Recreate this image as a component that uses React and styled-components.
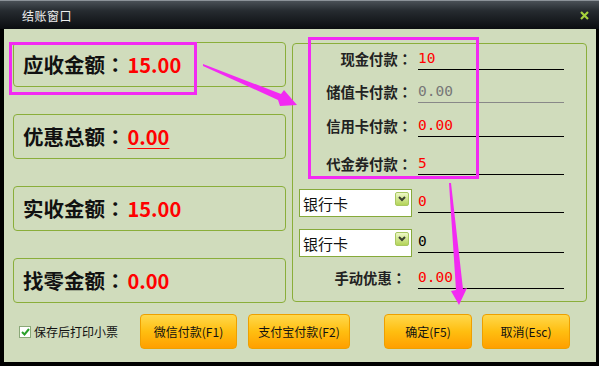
import React from 'react';
import styled, { createGlobalStyle } from 'styled-components';

const GlobalStyle = createGlobalStyle`
  html, body {
    margin: 0;
    padding: 0;
    background: #000;
  }
  body {
    font-family: "Noto Sans CJK SC", "Noto Sans", sans-serif;
  }
`;

const Window = styled.div`
  position: relative;
  width: 599px;
  height: 366px;
  box-sizing: border-box;
  padding: 0 3px 4px 4px;
  background: #000;
  display: flex;
  flex-direction: column;
`;

const TitleBar = styled.div`
  height: 29px;
  margin: 0 -3px 0 -4px;
  padding: 0 10px 0 22px;
  box-sizing: border-box;
  display: flex;
  align-items: center;
  justify-content: space-between;
  border-top: 1px solid #8c9298;
  background: linear-gradient(#4a5056 0%, #262b30 35%, #0b0d10 100%);
`;

const Title = styled.span`
  color: #eee;
  font-size: 12px;
  letter-spacing: 0.5px;
`;

const Close = styled.svg`
  width: 9px;
  height: 9px;
`;

const Body = styled.div`
  flex: 1;
  background: #d0dcbc;
  padding: 13px 9px 0 9px;
  display: flex;
  flex-direction: column;
`;

const Main = styled.div`
  display: flex;
  gap: 6px;
  height: 261px;
`;

const LeftCol = styled.div`
  width: 273px;
  display: flex;
  flex-direction: column;
  justify-content: space-between;
`;

const AmountBox = styled.div`
  height: 45px;
  box-sizing: border-box;
  border: 1px solid #8aae3a;
  border-radius: 4px;
  display: flex;
  align-items: center;
  padding-left: 9px;
  padding-bottom: 1px;
`;

const Label = styled.span`
  font-size: 20.5px;
  font-weight: bold;
  color: #111;
`;

/* centred full-width colon, as the TC cut of the font draws it */
const Colon = styled.span`
  font-family: "Noto Sans CJK TC", "Noto Sans CJK SC", sans-serif;
`;

const Amount = styled.span`
  margin-left: 2px;
  font-size: 20px;
  font-weight: bold;
  color: #ff0000;
  text-decoration: ${p => (p.$underline ? 'underline' : 'none')};
  text-underline-offset: 3px;
  text-decoration-thickness: 1px;
`;

const PayPanel = styled.div`
  flex: 1;
  height: 259px;
  margin-top: 1px;
  box-sizing: border-box;
  border: 1px solid #8aae3a;
  border-radius: 4px;
  padding-left: 6px;
`;

const PayRow = styled.div`
  display: grid;
  grid-template-columns: 113px 146px;
  column-gap: 6px;
  align-items: center;
  margin-top: ${p => p.$top}px;
`;

const PayLabel = styled.span`
  height: 20px;
  line-height: 18px;
  text-align: right;
  font-size: 14.3px;
  font-weight: bold;
  color: #222;
  padding-right: ${p => p.$pr || 0}px;
`;

const Field = styled.div`
  height: 20px;
  box-sizing: border-box;
  border-bottom: 1px solid ${p => (p.$muted ? '#888' : '#000')};
  font-family: "DejaVu Sans Mono", "Liberation Mono", monospace;
  font-size: 14.5px;
  line-height: 17px;
  color: ${p => p.$color || '#ff0000'};
`;

const Select = styled.div`
  height: 28px;
  box-sizing: border-box;
  background: #fff;
  border: 1px solid #86aa3a;
  display: flex;
  align-items: center;
  justify-content: space-between;
  padding: 0 2px 0 3px;
  font-size: 15px;
  color: #111;
`;

const DropButton = styled.span`
  width: 14px;
  height: 14px;
  margin-top: -8px;
  box-sizing: border-box;
  border: 1px solid #a8c860;
  border-radius: 2px;
  background: linear-gradient(#eef8c8, #b4d458);
  display: flex;
  align-items: center;
  justify-content: center;
`;

const Footer = styled.div`
  flex: 1;
  display: flex;
  align-items: center;
  padding-left: 6px;
  padding-bottom: 2px;
`;

const Check = styled.span`
  width: 12px;
  height: 12px;
  box-sizing: border-box;
  border: 1px solid #8aa878;
  background: #fff;
  display: flex;
  align-items: center;
  justify-content: center;
`;

const CheckText = styled.span`
  width: 84px;
  font-size: 12px;
  color: #111;
  margin-left: 3px;
  white-space: nowrap;
`;

const Button = styled.button`
  width: ${p => p.$w}px;
  height: 35px;
  margin-left: ${p => p.$ml}px;
  box-sizing: border-box;
  border: 1px solid #eea000;
  border-radius: 4px;
  background: linear-gradient(#ffd84c 0%, #ffbe10 50%, #ff9f00 100%);
  font-family: "Noto Sans CJK SC", sans-serif;
  font-size: 12px;
  color: #111;
  padding: 0;
  cursor: pointer;
`;

const Overlay = styled.svg`
  position: absolute;
  left: 0;
  top: 0;
  pointer-events: none;
`;

const BankSelect = () => (
  <Select>
    银行卡
    <DropButton>
      <svg width="8" height="6" viewBox="0 0 8 6">
        <path d="M1 1 L4 4 L7 1" fill="none" stroke="#3a4030" strokeWidth="2" />
      </svg>
    </DropButton>
  </Select>
);

const AmountRow = ({ label, value, underline }) => (
  <AmountBox>
    <Label>{label}<Colon>：</Colon></Label>
    <Amount $underline={underline}>{value}</Amount>
  </AmountBox>
);

const PayLine = ({ label, top, pr, children }) => (
  <PayRow $top={top}>
    <PayLabel $pr={pr}>{label}<Colon>：</Colon></PayLabel>
    {children}
  </PayRow>
);

export default function App() {
  return (
    <>
      <GlobalStyle />
      <Window>
        <TitleBar>
          <Title>结账窗口</Title>
          <Close viewBox="0 0 9 9">
            <path d="M1 1 L8 8 M8 1 L1 8" stroke="#a6d23c" strokeWidth="2.2" />
          </Close>
        </TitleBar>
        <Body>
          <Main>
            <LeftCol>
              <AmountRow label="应收金额" value="15.00" />
              <AmountRow label="优惠总额" value="0.00" underline />
              <AmountRow label="实收金额" value="15.00" />
              <AmountRow label="找零金额" value="0.00" />
            </LeftCol>
            <PayPanel>
              <PayLine label="现金付款" top={6}>
                <Field>10</Field>
              </PayLine>
              <PayLine label="储值卡付款" top={13}>
                <Field $muted $color="#777">0.00</Field>
              </PayLine>
              <PayLine label="信用卡付款" top={14}>
                <Field>0.00</Field>
              </PayLine>
              <PayLine label="代金券付款" top={18}>
                <Field>5</Field>
              </PayLine>
              <PayRow $top={14}>
                <BankSelect />
                <Field>0</Field>
              </PayRow>
              <PayRow $top={12}>
                <BankSelect />
                <Field $color="#000">0</Field>
              </PayRow>
              <PayLine label="手动优惠" top={12} pr={6}>
                <Field>0.00</Field>
              </PayLine>
            </PayPanel>
          </Main>
          <Footer>
            <Check>
              <svg width="9" height="8" viewBox="0 0 9 8">
                <path d="M1 4 L3.5 6.5 L8 1" fill="none" stroke="#2aa02a" strokeWidth="2" />
              </svg>
            </Check>
            <CheckText>保存后打印小票</CheckText>
            <Button $w={97} $ml={22}>微信付款(F1)</Button>
            <Button $w={102} $ml={11}>支付宝付款(F2)</Button>
            <Button $w={88} $ml={34}>确定(F5)</Button>
            <Button $w={88} $ml={10}>取消(Esc)</Button>
          </Footer>
        </Body>
        <Overlay width="599" height="366" viewBox="0 0 599 366">
          <rect x="10.5" y="43.5" width="185" height="50" fill="none" stroke="#f22af2" strokeWidth="3" />
          <rect x="309.5" y="38.5" width="168" height="139" fill="none" stroke="#f22af2" strokeWidth="3" />
          <polygon points="203,64 281,94 284,90 297,105 280,106 278,100 203,66" fill="#f22af2" />
          <polygon points="449,183 451,183 463,289 467,288 459,305 451,291 456,290" fill="#f22af2" />
        </Overlay>
      </Window>
    </>
  );
}
